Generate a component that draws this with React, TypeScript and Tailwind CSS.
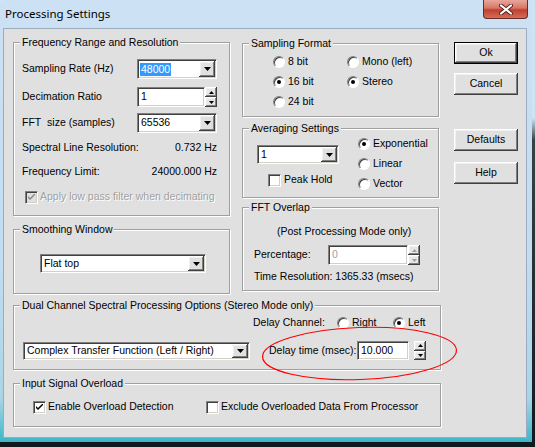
import type { ReactNode } from "react";

const raised =
  "shadow-[inset_-1px_-1px_0_#404040,inset_1px_1px_0_#ffffff,inset_-2px_-2px_0_#808080,inset_2px_2px_0_#f0f0f0]";
const sunken =
  "border border-t-[#808080] border-l-[#808080] border-b-white border-r-white shadow-[inset_1px_1px_0_#404040,inset_-1px_-1px_0_#d4d0c8]";

function Down({ color = "#000" }: { color?: string }) {
  return (
    <svg width="7" height="4" viewBox="0 0 7 4">
      <path d="M0 0h7L3.5 4z" fill={color} />
    </svg>
  );
}

function Combo({ value, selected, className }: { value: string; selected?: boolean; className: string }) {
  return (
    <div className={`flex bg-white ${sunken} ${className}`}>
      <div className="flex min-w-0 flex-1 items-center pl-[2px]">
        <span className={selected ? "bg-[#3399ff] px-[1px] leading-[13px] text-white" : "px-[1px]"}>{value}</span>
      </div>
      <div className={`my-[1px] mr-[1px] flex w-[16px] items-center justify-center bg-[#e0e0e0] ${raised}`}>
        <Down />
      </div>
    </div>
  );
}

function Spinner({ className, disabled }: { className: string; disabled?: boolean }) {
  const c = disabled ? "#a0a0a0" : "#000";
  return (
    <div className={`flex flex-col ${className}`}>
      <div className={`flex flex-1 items-center justify-center bg-[#e6e6e6] ${raised}`}>
        <svg width="5" height="3" viewBox="0 0 5 3">
          <path d="M2.5 0L5 3H0z" fill={c} />
        </svg>
      </div>
      <div className={`flex flex-1 items-center justify-center bg-[#e6e6e6] ${raised}`}>
        <svg width="5" height="3" viewBox="0 0 5 3">
          <path d="M0 0h5L2.5 3z" fill={c} />
        </svg>
      </div>
    </div>
  );
}

function Radio({ label, checked }: { label: string; checked?: boolean }) {
  return (
    <div className="flex items-center gap-[3px]">
      <span className="flex h-[12px] w-[12px] shrink-0 items-center justify-center rounded-full border border-t-[#808080] border-l-[#808080] border-b-white border-r-white bg-white shadow-[inset_1px_1px_0_#404040]">
        {checked && <span className="h-[4px] w-[4px] rounded-full bg-black" />}
      </span>
      <span className="whitespace-nowrap">{label}</span>
    </div>
  );
}

function Check({ checked, disabled }: { checked?: boolean; disabled?: boolean }) {
  return (
    <span
      className={`flex h-[13px] w-[13px] shrink-0 items-center justify-center ${sunken} ${
        disabled ? "bg-[#e0e0e0]" : "bg-white"
      }`}
    >
      {checked && (
        <svg width="7" height="7" viewBox="0 0 7 7">
          <path d="M0 2L2 4L7 -1V1L2 6L0 4z" fill={disabled ? "#8a8a8a" : "#000"} />
        </svg>
      )}
    </span>
  );
}

function Group({ title, className, children }: { title: string; className: string; children?: ReactNode }) {
  return (
    <div
      className={`relative border border-[#a0a0a0] shadow-[inset_1px_1px_0_#ffffff,1px_1px_0_#ffffff] ${className}`}
    >
      <span className="absolute left-[6px] top-[-8px] whitespace-nowrap bg-[#e0e0e0] px-[2px] leading-[14px]">
        {title}
      </span>
      {children}
    </div>
  );
}

function Btn({ label, def }: { label: string; def?: boolean }) {
  return (
    <button
      className={`flex h-[22px] w-[64px] items-center justify-center bg-[#e0e0e0] ${
        def ? "border border-black" : ""
      } ${raised}`}
    >
      {label}
    </button>
  );
}

export default function App() {
  return (
    <div className="relative h-[447px] w-[535px] overflow-hidden bg-[linear-gradient(to_bottom,#cfe3f5_0,#cfe3f5_118px,#3a4046_140px,#12181c_100%)] font-['Liberation_Sans',Arial,sans-serif] text-[10.5px] text-black">
      <div className="h-[442px] w-[532px] rounded-t-[6px] bg-[linear-gradient(to_bottom,#cde1f4_0%,#c2dcf0_60%,#a9d6e6_90%,#3cb6c8_100%)]">
        {/* title bar */}
        <div className="flex h-[28px] items-start justify-between">
          <span className="pl-[5px] pt-[6px] font-['Noto_Sans',sans-serif] text-[11.5px] leading-[16px] text-black">
            Processing Settings
          </span>
          <div className="mr-[4px] flex h-[19px] w-[45px] items-center justify-center rounded-b-[4px] border border-t-0 border-[#6b2a22] bg-[linear-gradient(to_bottom,#e9a79c_0%,#d77566_45%,#c0402e_55%,#d0705c_100%)]">
            <svg width="14" height="11" viewBox="0 0 14 11">
              <path d="M2 1.5L12 9.5M12 1.5L2 9.5" stroke="#5a2018" strokeWidth="4" strokeLinecap="round" />
              <path d="M2 1.5L12 9.5M12 1.5L2 9.5" stroke="#ffffff" strokeWidth="2.2" strokeLinecap="round" />
            </svg>
          </div>
        </div>

        {/* client */}
        <div className="ml-[3px] h-[410px] w-[524px] border border-[#9aacbd] bg-[#e0e0e0]">
          <div className="flex items-start">
            {/* left column */}
            <div className="ml-[9px] mt-[13px] w-[217px]">
              <Group title="Frequency Range and Resolution" className="h-[174px]">
                <div className="pl-[8px] pr-[12px] pt-[16px]">
                  <div className="flex h-[20px] items-center justify-between">
                    <span>Sampling Rate (Hz)</span>
                    <Combo value="48000" selected className="h-[20px] w-[80px]" />
                  </div>
                  <div className="mt-[8px] flex h-[20px] items-center justify-between">
                    <span>Decimation Ratio</span>
                    <div className="flex">
                      <div className={`flex h-[20px] w-[68px] items-center bg-white pl-[3px] ${sunken}`}>1</div>
                      <Spinner className="h-[20px] w-[12px]" />
                    </div>
                  </div>
                  <div className="mt-[6px] flex h-[20px] items-center justify-between">
                    <span>FFT&nbsp; size (samples)</span>
                    <Combo value="65536" className="h-[20px] w-[80px]" />
                  </div>
                  <div className="mt-[3px] flex h-[24px] items-center justify-between">
                    <span>Spectral Line Resolution:</span>
                    <span>0.732 Hz</span>
                  </div>
                  <div className="flex h-[24px] items-center justify-between">
                    <span>Frequency Limit:</span>
                    <span>24000.000 Hz</span>
                  </div>
                  <div className="ml-[3px] mt-[1px] flex h-[24px] items-center gap-[2px]">
                    <Check checked disabled />
                    <span className="whitespace-nowrap text-[#a0a0a0] [text-shadow:1px_1px_0_#ffffff]">
                      Apply low pass filter when decimating
                    </span>
                  </div>
                </div>
              </Group>
              <Group title="Smoothing Window" className="mt-[13px] h-[65px]">
                <div className="pl-[26px] pt-[24px]">
                  <Combo value="Flat top" className="h-[19px] w-[166px]" />
                </div>
              </Group>
            </div>

            {/* middle column */}
            <div className="ml-[12px] mt-[14px] w-[197px]">
              <Group title="Sampling Format" className="h-[74px]">
                <div className="grid grid-cols-[74px_1fr] pl-[30px] pt-[8px]">
                  <div className="flex h-[20px] items-center">
                    <Radio label="8 bit" />
                  </div>
                  <div className="flex h-[20px] items-center">
                    <Radio label="Mono (left)" />
                  </div>
                  <div className="flex h-[20px] items-center">
                    <Radio label="16 bit" checked />
                  </div>
                  <div className="flex h-[20px] items-center">
                    <Radio label="Stereo" checked />
                  </div>
                  <div className="flex h-[20px] items-center">
                    <Radio label="24 bit" />
                  </div>
                </div>
              </Group>
              <Group title="Averaging Settings" className="mt-[11px] h-[70px]">
                <div className="flex">
                  <div className="w-[115px] pl-[14px] pt-[16px]">
                    <Combo value="1" className="h-[19px] w-[82px]" />
                    <div className="ml-[11px] mt-[8px] flex h-[16px] items-center gap-[3px]">
                      <Check />
                      <span>Peak Hold</span>
                    </div>
                  </div>
                  <div className="pt-[5px]">
                    <div className="flex h-[20px] items-center">
                      <Radio label="Exponential" checked />
                    </div>
                    <div className="flex h-[20px] items-center">
                      <Radio label="Linear" />
                    </div>
                    <div className="flex h-[20px] items-center">
                      <Radio label="Vector" />
                    </div>
                  </div>
                </div>
              </Group>
              <Group title="FFT Overlap" className="mt-[9px] h-[84px]">
                <div className="pl-[11px] pt-[17px]">
                  <div className="ml-[23px] flex h-[14px] items-center">(Post Processing Mode only)</div>
                  <div className="mt-[6px] flex h-[20px] items-center">
                    <span className="w-[74px]">Percentage:</span>
                    <div className={`flex h-[20px] w-[80px] items-center bg-white pl-[3px] text-[#a0a0a0] ${sunken}`}>
                      0
                    </div>
                    <Spinner disabled className="h-[20px] w-[12px]" />
                  </div>
                  <div className="mt-[5px] flex h-[14px] items-center">Time Resolution: 1365.33 (msecs)</div>
                </div>
              </Group>
            </div>

            {/* buttons */}
            <div className="ml-[15px] mt-[13px] flex flex-col">
              <Btn label="Ok" def />
              <div className="mt-[9px]">
                <Btn label="Cancel" />
              </div>
              <div className="mt-[34px]">
                <Btn label="Defaults" />
              </div>
              <div className="mt-[11px]">
                <Btn label="Help" />
              </div>
            </div>
          </div>

          <Group
            title="Dual Channel Spectral Processing Options (Stereo Mode only)"
            className="ml-[9px] mt-[11px] h-[65px] w-[428px]"
          >
            <div className="mt-[9px] flex h-[16px] items-center pl-[239px]">
              <span className="w-[84px]">Delay Channel:</span>
              <div className="w-[56px]">
                <Radio label="Right" />
              </div>
              <Radio label="Left" checked />
            </div>
            <div className="mt-[10px] flex h-[19px] items-center pl-[9px]">
              <Combo value="Complex Transfer Function (Left / Right)" className="h-[18px] w-[227px]" />
              <span className="ml-[19px] w-[88px] whitespace-nowrap">Delay time (msec):</span>
              <div className={`flex h-[19px] w-[52px] items-center bg-white pl-[3px] ${sunken}`}>10.000</div>
              <Spinner className="ml-[5px] h-[19px] w-[12px]" />
            </div>
          </Group>

          <Group title="Input Signal Overload" className="ml-[9px] mt-[13px] h-[44px] w-[428px]">
            <div className="mt-[15px] flex h-[16px] items-center pl-[19px]">
              <div className="flex w-[173px] items-center gap-[2px]">
                <Check checked />
                <span>Enable Overload Detection</span>
              </div>
              <div className="flex items-center gap-[2px]">
                <Check />
                <span>Exclude Overloaded Data From Processor</span>
              </div>
            </div>
          </Group>
        </div>
      </div>

      <svg className="pointer-events-none absolute left-0 top-0" width="535" height="447">
        <ellipse
          cx="359.5"
          cy="353.5"
          rx="97"
          ry="26"
          fill="none"
          stroke="#ff0000"
          strokeWidth="1.2"
          transform="rotate(-2 359.5 353.5)"
        />
      </svg>
    </div>
  );
}
